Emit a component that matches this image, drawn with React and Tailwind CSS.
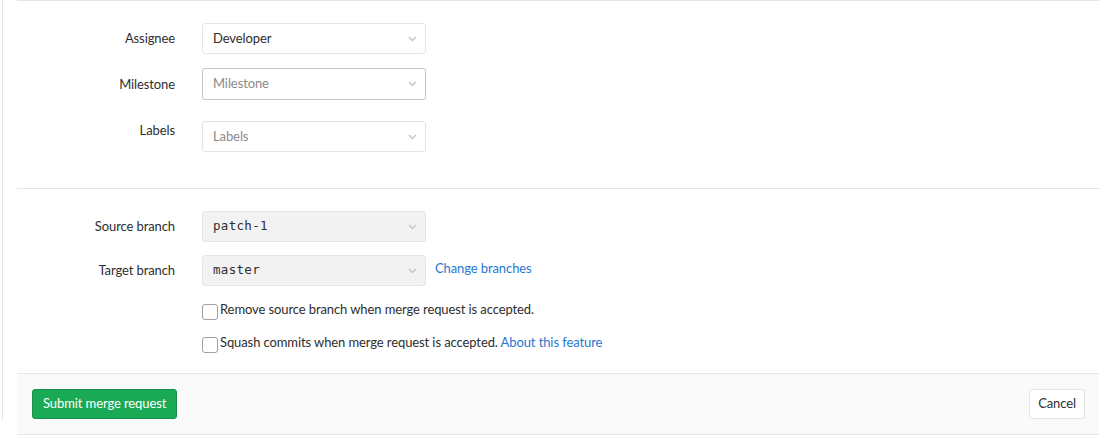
import React from 'react';

const Chevron = () => (
  <svg className="w-[9px] h-[6px] text-[#c4c4c4]" viewBox="0 0 9 6" fill="none" stroke="currentColor">
    <path d="M1 1l3.5 3.5L8 1" strokeWidth={1.4} />
  </svg>
);

function Dropdown({ value, placeholder, disabled, mono, strong, className = '' }) {
  return (
    <div
      className={`w-[224px] flex items-center justify-between pl-[10px] pr-[8px] rounded-[3px] border ${
        strong ? 'border-[#c4c4c4]' : 'border-[#e5e5e5]'
      } ${disabled ? 'bg-[#f2f2f2]' : 'bg-white'} ${className}`}
    >
      <span
        className={
          mono
            ? "text-[12.5px] text-[#2e2e2e] tracking-[0.3px] [font-family:'DejaVu_Sans_Mono',monospace]"
            : placeholder
            ? 'text-[#8a8a8a]'
            : 'text-[#2e2e2e]'
        }
      >
        {value || placeholder}
      </span>
      <Chevron />
    </div>
  );
}

function Row({ label, labelClass = 'self-center', children, className = '' }) {
  return (
    <div className={`flex ${className}`}>
      <div className={`w-[158px] text-right text-[#2e2e2e] ${labelClass}`}>{label}</div>
      <div className="ml-[27px] flex items-center">{children}</div>
    </div>
  );
}

export default function App() {
  return (
    <div className="flex bg-white text-[13px] tracking-[-0.1px] min-h-[438px] [font-family:Lato,'Noto_Sans',sans-serif]">
      {/* left rail */}
      <div className="w-[3px] h-[420px] border-r border-[#e5e5e5] shrink-0"></div>

      <div className="ml-[14px] w-[1082px] border-t border-[#e5e5e5]">
        <div className="pt-[22px]">
          <Row label="Assignee">
            <Dropdown value="Developer" className="h-[31px]" />
          </Row>
          <Row label="Milestone" labelClass="self-center mt-[2px]" className="mt-[14px]">
            <Dropdown placeholder="Milestone" strong className="h-[32px]" />
          </Row>
          <Row label="Labels" labelClass="self-start" className="mt-[21px]">
            <Dropdown placeholder="Labels" className="h-[31px]" />
          </Row>
        </div>

        <div className="mt-[36px] border-t border-[#e5e5e5]"></div>

        <div className="pt-[22px]">
          <Row label="Source branch">
            <Dropdown value="patch-1" mono disabled className="h-[31px]" />
          </Row>
          <Row label="Target branch" className="mt-[13px]">
            <Dropdown value="master" mono disabled className="h-[31px]" />
            <a className="ml-[9px] text-[#1f78d1] -mt-[3px]">Change branches</a>
          </Row>

          <div className="ml-[185px] mt-[18px] flex items-center">
            <span className="w-[16px] h-[16px] border border-[#a0a0a0] rounded-[3px] bg-white"></span>
            <span className="ml-[2px] -mt-[5px] text-[#2e2e2e]">Remove source branch when merge request is accepted.</span>
          </div>
          <div className="ml-[185px] mt-[17px] flex items-center">
            <span className="w-[16px] h-[16px] border border-[#a0a0a0] rounded-[3px] bg-white"></span>
            <span className="ml-[2px] -mt-[5px] text-[#2e2e2e]">
              Squash commits when merge request is accepted.{' '}
              <a className="text-[#1f78d1]">About this feature</a>
            </span>
          </div>
        </div>

        <div className="mt-[20px] h-[62px] bg-[#fafafa] border-y border-[#e5e5e5] flex items-center justify-between pl-[15px] pr-[14px]">
          <button className="h-[30px] px-[10px] rounded-[3px] bg-[#1aaa55] border border-[#168f48] text-white">
            Submit merge request
          </button>
          <button className="h-[30px] px-[8px] rounded-[3px] bg-white border border-[#e5e5e5] text-[#2e2e2e]">
            Cancel
          </button>
        </div>
      </div>
    </div>
  );
}
